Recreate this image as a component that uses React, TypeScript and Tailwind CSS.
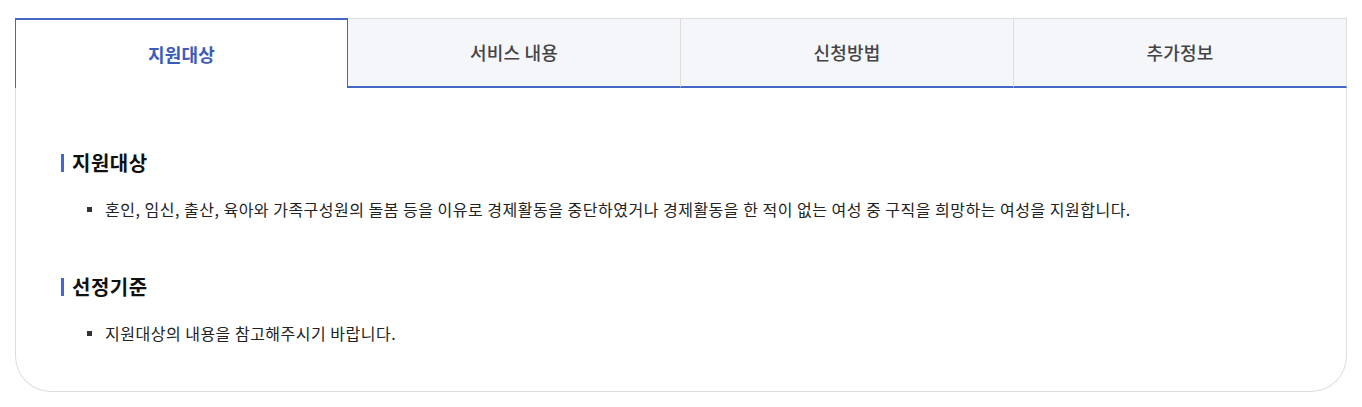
import React, { useState } from 'react';

const tabs = ['지원대상', '서비스 내용', '신청방법', '추가정보'];

const sections = [
  {
    title: '지원대상',
    items: [
      '혼인, 임신, 출산, 육아와 가족구성원의 돌봄 등을 이유로 경제활동을 중단하였거나 경제활동을 한 적이 없는 여성 중 구직을 희망하는 여성을 지원합니다.',
    ],
  },
  {
    title: '선정기준',
    items: ['지원대상의 내용을 참고해주시기 바랍니다.'],
  },
];

export default function App() {
  const [active, setActive] = useState(0);

  return (
    <div
      className="bg-white px-[15px] pt-[18px] pb-[14px]"
      style={{ fontFamily: '"Noto Sans CJK KR", "Noto Sans", sans-serif' }}
    >
      <div className="grid grid-cols-4 h-[70px]">
        {tabs.map((t, i) =>
          i === active ? (
            <button
              key={t}
              onClick={() => setActive(i)}
              className="flex items-center justify-center bg-white border-t-2 border-x border-[#4466c4] text-[18px] font-bold text-[#3d5cb8] tracking-[0.2px]"
            >
              {t}
            </button>
          ) : (
            <button
              key={t}
              onClick={() => setActive(i)}
              className="flex items-center justify-center bg-[#f5f6fa] border-t border-r border-[#dddddd] border-b-2 border-b-[#4466c4] text-[18px] font-medium text-[#444444] tracking-[0.2px]"
            >
              {t}
            </button>
          )
        )}
      </div>

      <div className="border-x border-b border-[#dddddd] rounded-b-[36px] pl-[45px] pr-6 pt-[61px] pb-[46px]">
        {sections.map((s, si) => (
          <div key={s.title} className={si > 0 ? 'mt-[52px]' : ''}>
            <h3 className="flex items-center gap-2 text-[20px] leading-[28px] font-bold text-[#111111] tracking-[0.5px]">
              <span className="w-[3px] h-[18px] bg-[#4466d0]" />
              {s.title}
            </h3>
            <ul className="mt-[20px] pl-[26px]">
              {s.items.map((it) => (
                <li key={it} className="flex items-start text-[16px] leading-[24px] text-[#222222] tracking-[0.5px]">
                  <span className="mt-[10px] mr-[13px] w-[5px] h-[5px] bg-[#333333] shrink-0" />
                  {it}
                </li>
              ))}
            </ul>
          </div>
        ))}
      </div>
    </div>
  );
}
